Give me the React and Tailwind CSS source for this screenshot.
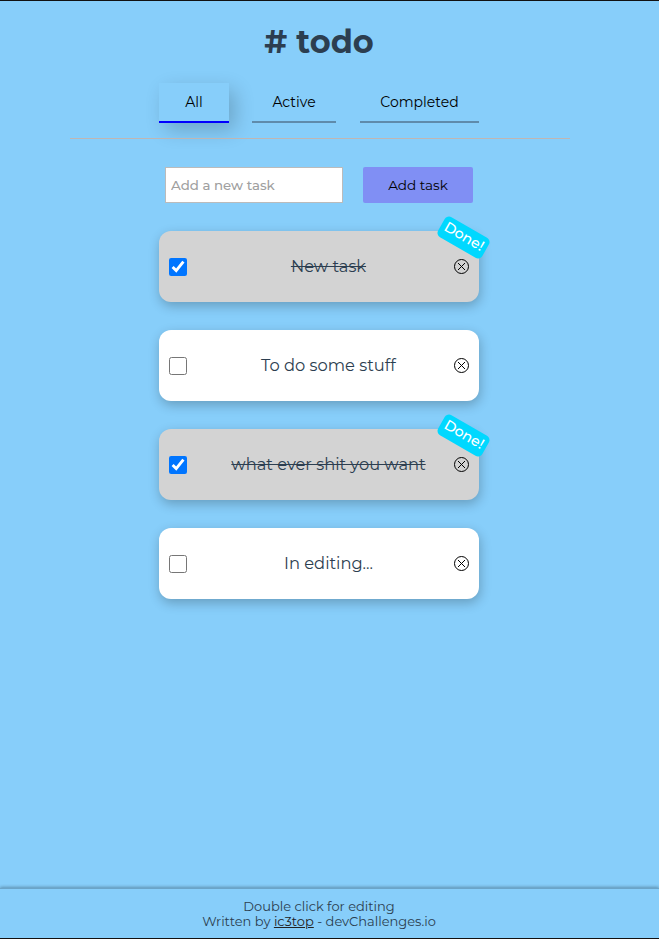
const tasks = [
  { text: 'New task', done: true },
  { text: 'To do some stuff', done: false },
  { text: 'what ever shit you want', done: true },
  { text: 'In editing...', done: false },
];

function CloseIcon() {
  return (
    <svg width="17" height="17" viewBox="0 0 17 17" fill="none" stroke="#000" strokeWidth="1">
      <circle cx="8.5" cy="8.5" r="7" />
      <path d="M5 5l7 7M12 5l-7 7" />
    </svg>
  );
}

function Task({ text, done }) {
  return (
    <li
      className={`relative flex h-[71px] items-center rounded-[12px] pl-2.5 pr-[9px] shadow-[1px_4px_12px_rgba(0,0,0,0.24)] ${
        done ? 'bg-[#d3d3d3]' : 'bg-white'
      }`}
    >
      <input type="checkbox" defaultChecked={done} className="mt-px h-[18px] w-[18px] shrink-0" />
      <span
        className={`min-w-0 flex-1 pb-[2px] pl-[17px] text-center text-[16.32px] leading-5 whitespace-nowrap ${
          done ? 'line-through' : ''
        }`}
      >
        {text}
      </span>
      <button className="shrink-0" aria-label="Delete">
        <CloseIcon />
      </button>
      {done && (
        <span className="absolute top-[-5.5px] left-[278.5px] flex h-[23px] w-[51px] rotate-30 items-center justify-center rounded-[5px] bg-[#00d8ff] pb-px text-[14.4px] font-medium text-white">
          Done!
        </span>
      )}
    </li>
  );
}

export default function App() {
  return (
    <div className="flex h-[939px] w-[659px] flex-col overflow-hidden border-y border-[#111] bg-[#87cefa] font-[Montserrat,Inter,sans-serif] text-[#2c3e50]">
      <main className="flex w-[638px] flex-1 flex-col items-center">
        <h1 className="mt-[21px] text-[32px] leading-10 font-bold">
          # todo
        </h1>
        <nav className="mt-[21px] flex h-10 w-80 text-[14px] text-black">
          <button className="mr-[23px] w-[70px] border-b-2 border-[#0000ff] shadow-[6px_7px_20px_rgba(0,0,0,0.2)]">
            All
          </button>
          <button className="mr-6 w-[84px] border-b-2 border-[#5f8bab]">Active</button>
          <button className="w-[119px] border-b-2 border-[#5f8bab]">Completed</button>
        </nav>
        <hr className="mt-[15px] ml-[2px] w-[500px] border-t border-[#c0b6b2]" />
        <form className="mt-7 flex gap-5 text-[13.33px]">
          <input
            placeholder="Add a new task"
            className="h-9 w-[178px] border border-[#bbb] bg-white px-[5px] font-medium placeholder:text-[#a0a0a0]"
          />
          <button type="button" className="h-9 w-[110px] rounded-[2px] bg-[#808ff4] pt-px text-[13.6px] text-black">
            Add task
          </button>
        </form>
        <ul className="mt-7 flex w-80 flex-col gap-7">
          {tasks.map((t) => (
            <Task key={t.text} {...t} />
          ))}
        </ul>
      </main>
      <footer className="h-[50px] border-t border-[#6ba4c8] pt-2.5 pr-[21px] text-center text-[13px] leading-[15px] shadow-[0_-1px_3px_rgba(0,0,0,0.3)]">
        <p>Double click for editing</p>
        <p>
          Written by <a className="text-[#222] underline">ic3top</a> - devChallenges.io
        </p>
      </footer>
    </div>
  );
}
